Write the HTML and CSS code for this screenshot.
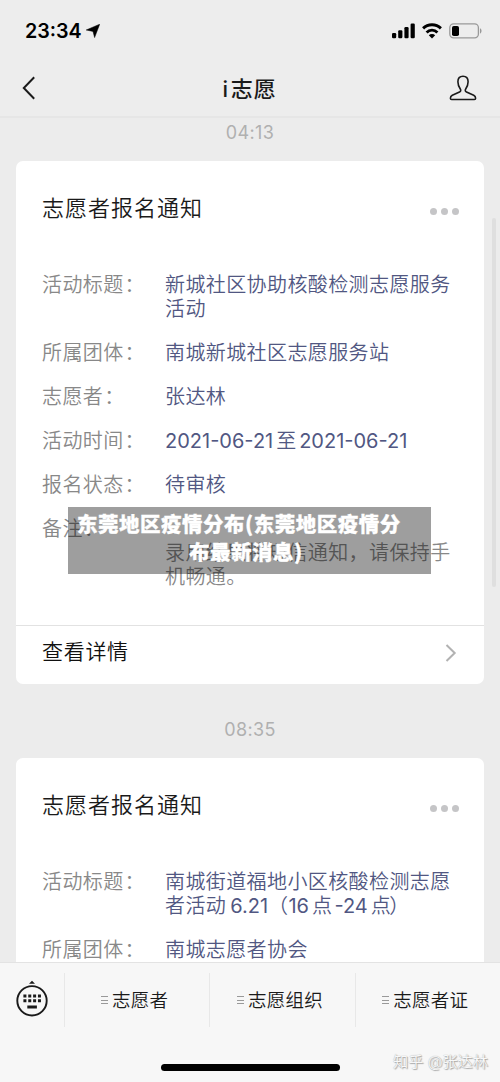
FILE: index.html
```html
<!DOCTYPE html>
<html lang="zh-CN">
<head>
<meta charset="utf-8">
<title>i志愿</title>
<link rel="stylesheet" href="styles.css">
</head>
<body>
<div class="app">
  <header class="header">
    <div class="status">
      <span class="clock">23:34</span>
      <svg class="locate" width="14" height="14" viewBox="0 0 14 14"><path d="M13.7.2 8.6 13.6 7 7.4.2 6z" fill="#000" stroke="#000" stroke-width=".5" stroke-linejoin="round"/></svg>
      <div class="status-icons">
        <svg width="23" height="16" viewBox="0 0 23 16"><rect x="0" y="10" width="4.2" height="5.2" rx="1.2"/><rect x="6.2" y="7.2" width="4.2" height="8" rx="1.2"/><rect x="12.4" y="4" width="4.2" height="11.2" rx="1.2"/><rect x="18.6" y="0.5" width="4.2" height="14.7" rx="1.2"/></svg>
        <svg width="20" height="16" viewBox="0 0 20 16"><path d="M1.1 5.4a12.6 12.6 0 0 1 17.8 0M4.6 9.4a7.6 7.6 0 0 1 10.8 0" fill="none" stroke="#000" stroke-width="2.9"/><path d="M6.8 12.2a4.6 4.6 0 0 1 6.4 0L10 15.5z"/></svg>
        <svg width="34" height="16" viewBox="0 0 34 16"><rect x=".8" y=".9" width="28.6" height="14" rx="3.8" fill="none" stroke="#999" stroke-width="1.3"/><rect x="3" y="3" width="7" height="10" rx="1.8"/><path d="M31 5.2c2 .8 2 4.6 0 5.4z" fill="#999"/></svg>
      </div>
    </div>
    <div class="nav">
      <svg width="14" height="24" viewBox="0 0 14 24"><path d="M12.2 1.3 1.8 12l10.4 10.7" fill="none" stroke="#1a1a1a" stroke-width="2"/></svg>
      <h1 class="nav-title"><span class="nav-i">i</span>志愿</h1>
      <svg width="28" height="26" viewBox="0 0 28 26"><path d="M14 1.2c-3.2 0-5.1 2.2-5.1 5.6 0 3.1 1 5.2 2.4 7.2.8 1.2.5 2.3-.8 2.9l-7.2 3.3c-1.4.7-1.9 1.7-1.9 3 0 .8.4 1.3 1.2 1.3h22.8c.8 0 1.2-.5 1.2-1.3 0-1.3-.5-2.3-1.9-3l-7.2-3.3c-1.3-.6-1.6-1.7-.8-2.9 1.4-2 2.4-4.1 2.4-7.2 0-3.4-1.9-5.6-5.1-5.6z" fill="none" stroke="#1a1a1a" stroke-width="1.6" stroke-linejoin="round"/></svg>
    </div>
  </header>
  <main class="feed">
    <time class="stamp">04:13</time>
    <section class="card">
      <div class="card-head"><h2 class="card-title">志愿者报名通知</h2><span class="dots"><i class="dot"></i><i class="dot"></i><i class="dot"></i></span></div>
      <dl class="fields">
        <dt>活动标题<span class="colon">：</span></dt><dd>新城社区协助核酸检测志愿服务<br>活动</dd>
        <dt>所属团体<span class="colon">：</span></dt><dd>南城新城社区志愿服务站</dd>
        <dt>志愿者<span class="colon">：</span></dt><dd>张达林</dd>
        <dt>活动时间<span class="colon">：</span></dt><dd><span class="num">2021-06-21</span><span class="mid">至</span><span class="num">2021-06-21</span></dd>
        <dt>报名状态<span class="colon">：</span></dt><dd>待审核</dd>
        <dt>备注<span class="colon">：</span></dt><dd class="note"><br>录用结果将短信通知，请保持手<br>机畅通。</dd>
      </dl>
      <div class="detail"><span>查看详情</span><svg width="12" height="18" viewBox="0 0 12 18"><path d="m1.5 1 8.2 8-8.2 8" fill="none" stroke="#b2b2b2" stroke-width="2"/></svg></div>
      <div class="caption"><span class="cap-one">东莞地区疫情分布(东莞地区疫情分</span><span class="cap-two">布最新消息)</span></div>
    </section>
    <time class="stamp later">08:35</time>
    <section class="card card-last">
      <div class="card-head"><h2 class="card-title">志愿者报名通知</h2><span class="dots"><i class="dot"></i><i class="dot"></i><i class="dot"></i></span></div>
      <dl class="fields">
        <dt>活动标题<span class="colon">：</span></dt><dd>南城街道福地小区核酸检测志愿<br>者活动<span class="num lead">6.21</span>（<span class="num">16</span><span class="pt">点</span><span class="num">-24</span><span class="pt pt-end">点</span>）</dd>
        <dt>所属团体<span class="colon">：</span></dt><dd>南城志愿者协会</dd>
      </dl>
    </section>
    <div class="scrollbar"></div>
  </main>
  <footer class="footer">
    <div class="menu">
      <div class="keyboard"><svg width="32" height="38" viewBox="0 0 32 38"><path d="M13 3.7 16 .8l3 2.9z" fill="#1a1a1a"/><circle cx="16" cy="20.8" r="14.7" fill="none" stroke="#1a1a1a" stroke-width="1.9"/><path d="M7.4 16h17.6M7.4 20.8h17.6" stroke="#1a1a1a" stroke-width="3" stroke-dasharray="3 1.85"/><path d="M11.3 27h9.6" stroke="#1a1a1a" stroke-width="3"/></svg></div>
      <div class="item"><i class="lines"></i><span class="label">志愿者</span></div>
      <div class="item"><i class="lines"></i><span class="label">志愿组织</span></div>
      <div class="item"><i class="lines"></i><span class="label">志愿者证</span></div>
    </div>
    <div class="home"></div>
    <div class="credit">知乎 @张达林</div>
  </footer>
</div>
</body>
</html>
```
FILE: styles.css
```css
* { box-sizing: border-box; }
body { margin: 0; font-family: Inter, "Noto Sans CJK SC", sans-serif; background: #ececec; color: #1a1a1a; }
h1, h2, dl, dd { margin: 0; font-weight: 400; }
svg { display: block; flex: none; }
.app { width: 500px; height: 1082px; display: flex; flex-direction: column; overflow: hidden; }
.header { flex: none; height: 118px; background: #ededed; border-bottom: 2px solid #e6e6e6; }
.status { height: 60px; padding: 2px 17px 0 25px; display: flex; align-items: center; }
.clock { width: 56px; font-size: 19.7px; font-weight: 600; color: #000; white-space: nowrap; }
.locate { margin-left: 5px; }
.status-icons { display: flex; gap: 7px; margin-left: auto; }
.nav { height: 56px; padding: 0 23px 0 22px; display: flex; justify-content: space-between; align-items: center; }
.nav-title { font-size: 22px; font-weight: 500; line-height: 30px; letter-spacing: .8px; margin-left: 14px; padding-top: 1px; }
.nav-i { margin-right: 2px; }
.feed { position: relative; flex: 1; min-height: 0; padding: 0 16px; overflow: hidden; }
.stamp { display: block; height: 43px; padding-top: 3px; line-height: 24px; font-size: 18px; letter-spacing: .4px; color: #b0b0b0; text-align: center; }
.later { height: 74px; padding-top: 34px; }
.card { position: relative; background: #fff; border-radius: 7px; }
.card-last { padding-bottom: 40px; }
.card-head { height: 112px; padding: 31px 25px 0 26px; display: flex; justify-content: space-between; align-items: flex-start; }
.card-title { font-size: 22px; line-height: 32px; letter-spacing: 1px; font-weight: 350; }
.dots { display: flex; gap: 4px; padding-top: 16px; }
.dot { width: 7px; height: 7px; border-radius: 50%; background: #c5c5c7; }
.fields { display: grid; grid-template-columns: 123px 1fr; row-gap: 20px; padding: 0 0 0 26px; font-size: 20px; font-weight: 350; line-height: 24px; letter-spacing: .4px; color: #888; white-space: nowrap; }
.fields dt, .fields dd { font-weight: 350; }
.fields dd { color: #515782; }
.fields .note { color: #888; }
.colon { padding-left: 1px; }
.num { font-weight: 400; letter-spacing: 0; }
.mid { margin: 0 2.5px 0 3px; }
.lead { margin-left: 4px; }
.pt { margin: 0 2px 0 3px; }
.pt-end { margin-right: -2px; }
.detail { margin-top: 36px; height: 59px; border-top: 1px solid #e2e2e2; padding: 0 27px 4px 26px; display: flex; justify-content: space-between; align-items: center; font-size: 21px; font-weight: 350; line-height: 30px; letter-spacing: .7px; color: #111; }
.detail span { padding-bottom: 2px; }
.caption { position: absolute; left: 52px; top: 346px; width: 363px; height: 67px; padding-top: 2px; background: rgba(0,0,0,.38); color: #fff; font-family: "Noto Sans CJK SC", sans-serif; font-weight: 900; font-size: 20.5px; line-height: 28px; letter-spacing: .5px; white-space: nowrap; -webkit-text-stroke: .3px #fff; }
.cap-one, .cap-two { display: block; padding-left: 9px; }
.cap-two { padding-left: 121px; }
.scrollbar { position: absolute; right: 4px; top: 100px; width: 4px; height: 369px; border-radius: 2px; background: #dfdfdf; }
.footer { position: relative; flex: none; height: 120px; background: #f7f7f7; border-top: 1px solid #e3e3e3; }
.menu { display: flex; height: 75px; padding-top: 9px; }
.keyboard { width: 64px; padding: 8px 0 0 16px; }
.item { flex: 1; height: 54px; margin-top: 1px; border-left: 1px solid #e8e8e8; display: flex; justify-content: center; align-items: center; gap: 4px; font-size: 18.5px; font-weight: 350; letter-spacing: .3px; padding-right: 5px; }
.label { padding-bottom: 2px; }
.lines { width: 7px; height: 8px; border-top: 1px solid #999; border-bottom: 1px solid #999; background: linear-gradient(#999, #999) 0 50% / 7px 1px no-repeat; }
.home { width: 179px; height: 7px; margin: 26px auto 0; border-radius: 4px; background: #000; }
.credit { position: absolute; left: 393px; top: 88px; font-size: 15.2px; font-weight: 350; line-height: 22px; color: #f8f8f8; text-shadow: 0 0 1px #999, 1px 1px 1px #aaa; white-space: nowrap; }
```
